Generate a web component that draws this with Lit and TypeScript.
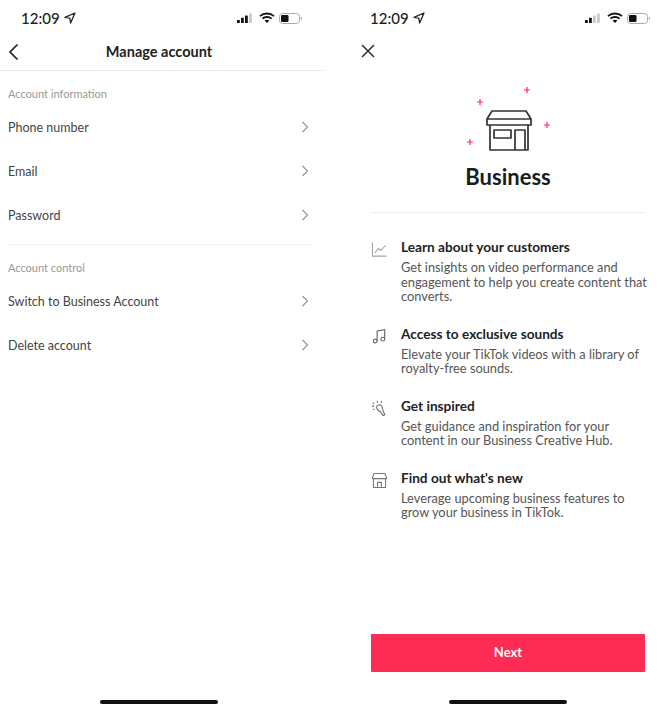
import { LitElement, html, css, svg } from "lit";
import { customElement } from "lit/decorators.js";

const chevron = html`<svg class="chevron" width="8" height="12" viewBox="0 0 8 12">
  <path d="M1.5 1L6.5 6L1.5 11" fill="none" stroke="#9b9b9b" stroke-width="1.3" />
</svg>`;

const sparkle = (x: number, y: number) =>
  svg`<path d="M${x - 3} ${y}H${x + 3}M${x} ${y - 3}V${y + 3}" stroke="#fe2c55" stroke-width="1.2" />`;

const statusBar = (signalBars: number) => html`
  <div class="status">
    <span class="time">12:09</span>
    <svg width="12" height="12" viewBox="0 0 12 12">
      <path d="M11 1L1 5.4L5.8 6.2L6.6 11Z" fill="none" stroke="#222" stroke-width="1.3" stroke-linejoin="round" />
    </svg>
    <span class="spacer"></span>
    <svg width="16" height="11" viewBox="0 0 16 11">
      ${[0, 1, 2, 3].map(
        (i) =>
          svg`<rect x=${i * 4} y=${7 - i * 2.2} width="2.8" height=${3 + i * 2.2} rx="0.5" fill=${i < signalBars ? "#111" : "#c9c9c9"} />`
      )}
    </svg>
    <svg class="wifi" width="16" height="12" viewBox="0 0 16 12">
      <path d="M1 4.2C5 .6 11 .6 15 4.2M3.4 6.7C6 4.4 10 4.4 12.6 6.7" fill="none" stroke="#111" stroke-width="1.8" />
      <path d="M5.6 8.6C7 7.5 9 7.5 10.4 8.6L8 11Z" fill="#111" />
    </svg>
    <svg width="23" height="11" viewBox="0 0 23 11">
      <rect x="0.5" y="0.5" width="20" height="10" rx="3" fill="none" stroke="#aaa" />
      <rect x="2" y="2" width="7.5" height="7" rx="1.2" fill="#111" />
      <path d="M21.8 3.7C22.6 4 23 4.7 23 5.5S22.6 7 21.8 7.3Z" fill="#aaa" />
    </svg>
  </div>
`;

const chartIcon = html`<svg viewBox="0 0 18 18" fill="none" stroke="#a3a3a3" stroke-width="1.1">
  <path d="M1.5 1.5V16H16.5" />
  <path d="M4 12.5L8 8L10.5 10L15.5 4.5" />
</svg>`;

const noteIcon = html`<svg viewBox="0 0 18 18" fill="none" stroke="#666" stroke-width="1.2">
  <path d="M6.5 13.5V3.2L14.5 1.8V11.5" />
  <circle cx="4.5" cy="13.8" r="2" />
  <circle cx="12.5" cy="11.8" r="2" />
</svg>`;

const bulbIcon = html`<svg viewBox="0 0 18 18" fill="none" stroke="#666" stroke-width="1.1">
  <path d="M6 7.2C6.2 5.2 9.4 4.4 11 6C12.4 7.4 12.2 9.4 12.6 11L14.6 15.6L12.8 16.4L9.8 12.2C8 11.4 5.8 9.6 6 7.2Z" />
  <path d="M1 6.5H3.2M1.8 2.8L3.4 4.2M6.6 .8L7 3M11.5 1L10.6 3M2 10.5L3.6 9.4" />
</svg>`;

const shopIcon = html`<svg viewBox="0 0 18 18" fill="none" stroke="#777" stroke-width="1.1">
  <path d="M3.4 1.5H14.6L16.4 5.5V7H1.6V5.5Z" stroke-linejoin="round" />
  <path d="M2.6 7V16.4H15.4V7" />
  <path d="M7 16.4V11H11V16.4" />
</svg>`;

const features = [
  {
    icon: chartIcon,
    title: "Learn about your customers",
    text: html`Get insights on video performance and<br />engagement to help you create content that<br />converts.`,
  },
  {
    icon: noteIcon,
    title: "Access to exclusive sounds",
    text: html`Elevate your TikTok videos with a library of<br />royalty-free sounds.`,
  },
  {
    icon: bulbIcon,
    title: "Get inspired",
    text: html`Get guidance and inspiration for your<br />content in our Business Creative Hub.`,
  },
  {
    icon: shopIcon,
    title: "Find out what's new",
    text: html`Leverage upcoming business features to<br />grow your business in TikTok.`,
  },
];

@customElement("app-root")
export class AppRoot extends LitElement {
  static styles = css`
    :host {
      display: grid;
      grid-template-columns: 325px 333px;
      height: 713px;
      background: #fff;
      font-family: "Lato", "Liberation Sans", sans-serif;
      color: #222;
      overflow: hidden;
    }

    .phone {
      display: flex;
      flex-direction: column;
      height: 713px;
      box-sizing: border-box;
    }

    .status {
      display: flex;
      align-items: center;
      gap: 4px;
      height: 36px;
      padding-right: 23px;
      padding-left: 21px;
      box-sizing: border-box;
    }

    .time {
      font-size: 15px;
      font-weight: 500;
      color: #222;
    }

    .spacer {
      flex: 1;
    }

    .wifi {
      margin-left: 2px;
    }

    .nav {
      display: flex;
      align-items: center;
      justify-content: center;
      position: relative;
      height: 35px;
      padding: 0 7px 3px 0;
      box-sizing: border-box;
      border-bottom: 1px solid #ececec;
      font-size: 14.5px;
      font-weight: 700;
    }

    .back {
      position: absolute;
      left: 8px;
      top: 7px;
    }

    .section {
      padding: 16px 8px 0;
      font-size: 11px;
      line-height: 14px;
      color: #999;
    }

    .row {
      display: flex;
      align-items: center;
      justify-content: space-between;
      height: 44px;
      padding: 0 16px 0 8px;
      font-size: 12.5px;
      color: #444;
    }

    .list {
      padding-top: 4px;
      padding-bottom: 7px;
    }

    .rule {
      height: 1px;
      background: #f2f2f2;
      margin: 0 14px 0 8px;
    }

    .home {
      width: 118px;
      height: 4px;
      border-radius: 2px;
      background: #111;
      margin: auto 0 9px 100px;
    }

    .right .status {
      padding-left: 45px;
      padding-right: 8px;
    }

    .close {
      height: 34px;
      padding: 0 0 4px 36px;
      box-sizing: border-box;
      display: flex;
      align-items: center;
    }

    .hero {
      display: flex;
      flex-direction: column;
      align-items: center;
      margin: 0 13px 0 46px;
      padding-bottom: 21px;
      border-bottom: 1px solid #efefef;
    }

    .hero svg {
      display: block;
      margin: 16px 0 0 3px;
    }

    .hero h1 {
      margin: 7px 0 0;
      font-size: 22px;
      line-height: 28px;
      font-weight: 700;
      color: #1c1c1c;
    }

    .features {
      display: flex;
      flex-direction: column;
      gap: 21px;
      padding: 25px 8px 0 46px;
    }

    .feature {
      display: grid;
      grid-template-columns: 30px 1fr;
    }

    .feature svg {
      width: 17px;
      height: 17px;
      margin-top: 3px;
    }

    .feature h2 {
      margin: 0;
      font-size: 13.65px;
      line-height: 18px;
      font-weight: 700;
      color: #222;
    }

    .feature p {
      margin: 4px 0 0;
      font-size: 12.8px;
      line-height: 14.5px;
      color: #555;
    }

    .next {
      display: flex;
      align-items: center;
      justify-content: center;
      height: 38px;
      margin: auto 13px 0 46px;
      padding-bottom: 2px;
      box-sizing: border-box;
      border-radius: 1px;
      background: #fe2c55;
      color: #fff;
      font-size: 13px;
      font-weight: 700;
    }

    .right .home {
      margin: 28px 0 9px 124px;
    }
  `;

  render() {
    return html`
      <div class="phone">
        ${statusBar(3)}
        <div class="nav">
          <svg class="back" width="12" height="18" viewBox="0 0 12 18">
            <path d="M9.5 1.5L2 9L9.5 16.5" fill="none" stroke="#222" stroke-width="1.7" />
          </svg>
          Manage account
        </div>
        <div class="section">Account information</div>
        <div class="list">
          ${["Phone number", "Email", "Password"].map(
            (r) => html`<div class="row">${r}${chevron}</div>`
          )}
        </div>
        <div class="rule"></div>
        <div class="section">Account control</div>
        <div class="list">
          ${["Switch to Business Account", "Delete account"].map(
            (r) => html`<div class="row">${r}${chevron}</div>`
          )}
        </div>
        <div class="home"></div>
      </div>

      <div class="phone right">
        ${statusBar(2)}
        <div class="close">
          <svg width="14" height="14" viewBox="0 0 14 14">
            <path d="M1 1L13 13M13 1L1 13" stroke="#333" stroke-width="1.6" />
          </svg>
        </div>
        <div class="hero">
          <svg width="90" height="70" viewBox="0 0 90 70" fill="none">
            ${sparkle(15, 16)} ${sparkle(62, 4)} ${sparkle(82, 39)} ${sparkle(5, 56)}
            <g stroke="#333" stroke-width="1.7" stroke-linejoin="round">
              <path d="M27 25H61L66 33V39H22V33Z" />
              <path d="M22 33H66" />
              <path d="M25 39V64H63V39" />
              <rect x="29" y="44" width="17" height="8" />
              <path d="M50 64V44H60V64" />
            </g>
          </svg>
          <h1>Business</h1>
        </div>
        <div class="features">
          ${features.map(
            (f) => html`
              <div class="feature">
                ${f.icon}
                <div>
                  <h2>${f.title}</h2>
                  <p>${f.text}</p>
                </div>
              </div>
            `
          )}
        </div>
        <div class="next">Next</div>
        <div class="home"></div>
      </div>
    `;
  }
}
